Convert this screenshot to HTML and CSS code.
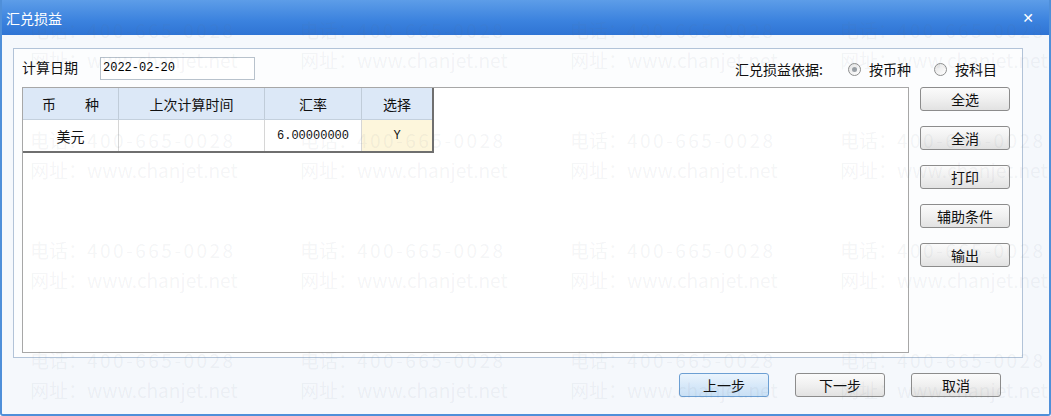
FILE: index.html
```html
<!DOCTYPE html>
<html lang="zh-CN">
	<head>
		<meta charset="UTF-8" />
		<title>汇兑损益</title>
		<link rel="stylesheet" href="styles.css">
	</head>
	<body>
		<div class="window">
			<div class="titlebar">
				<span class="title">汇兑损益</span>
				<span class="close">&#x2715;</span>
			</div>
			<div class="body">
				<div class="frame">
					<div class="toprow">
						<label class="field">
							<span>计算日期</span>
							<input class="date" value="2022-02-20" />
						</label>
						<div class="basis">
							<span class="basis-label">汇兑损益依据:</span>
							<span class="radio checked"></span>
							<span class="radio-text">按币种</span>
							<span class="radio"></span>
							<span class="radio-text">按科目</span>
						</div>
					</div>
					<div class="content">
						<div class="gridbox">
							<table class="grid">
								<thead>
									<tr>
										<th class="c1"><span class="spread"><span>币</span><span>种</span></span></th>
										<th class="c2">上次计算时间</th>
										<th class="c3">汇率</th>
										<th class="c4">选择</th>
									</tr>
								</thead>
								<tbody>
									<tr>
										<td class="c1">美元</td>
										<td class="c2"></td>
										<td class="c3 num">6.00000000</td>
										<td class="c4 pick">Y</td>
									</tr>
								</tbody>
							</table>
						</div>
						<div class="side">
							<button class="btn">全选</button>
							<button class="btn">全消</button>
							<button class="btn">打印</button>
							<button class="btn">辅助条件</button>
							<button class="btn">输出</button>
						</div>
					</div>
				</div>
				<div class="footer">
					<button class="btn focus">上一步</button>
					<button class="btn">下一步</button>
					<button class="btn">取消</button>
				</div>
			</div>
			<div class="watermark">
				<div class="wm"><p>电话：<span class="tel">400-665-0028</span></p><p>网址：www.chanjet.net</p></div>
				<div class="wm"><p>电话：<span class="tel">400-665-0028</span></p><p>网址：www.chanjet.net</p></div>
				<div class="wm"><p>电话：<span class="tel">400-665-0028</span></p><p>网址：www.chanjet.net</p></div>
				<div class="wm"><p>电话：<span class="tel">400-665-0028</span></p><p>网址：www.chanjet.net</p></div>
				<div class="wm"><p>电话：<span class="tel">400-665-0028</span></p><p>网址：www.chanjet.net</p></div>
				<div class="wm"><p>电话：<span class="tel">400-665-0028</span></p><p>网址：www.chanjet.net</p></div>
				<div class="wm"><p>电话：<span class="tel">400-665-0028</span></p><p>网址：www.chanjet.net</p></div>
				<div class="wm"><p>电话：<span class="tel">400-665-0028</span></p><p>网址：www.chanjet.net</p></div>
				<div class="wm"><p>电话：<span class="tel">400-665-0028</span></p><p>网址：www.chanjet.net</p></div>
				<div class="wm"><p>电话：<span class="tel">400-665-0028</span></p><p>网址：www.chanjet.net</p></div>
				<div class="wm"><p>电话：<span class="tel">400-665-0028</span></p><p>网址：www.chanjet.net</p></div>
				<div class="wm"><p>电话：<span class="tel">400-665-0028</span></p><p>网址：www.chanjet.net</p></div>
				<div class="wm"><p>电话：<span class="tel">400-665-0028</span></p><p>网址：www.chanjet.net</p></div>
				<div class="wm"><p>电话：<span class="tel">400-665-0028</span></p><p>网址：www.chanjet.net</p></div>
				<div class="wm"><p>电话：<span class="tel">400-665-0028</span></p><p>网址：www.chanjet.net</p></div>
				<div class="wm"><p>电话：<span class="tel">400-665-0028</span></p><p>网址：www.chanjet.net</p></div>
			</div>
		</div>
	</body>
</html>
```

FILE: styles.css
```css
html,
body {
	margin: 0;
	padding: 0;
	width: 1051px;
	height: 416px;
	overflow: hidden;
	font-family: "Noto Sans CJK SC", "Liberation Sans", sans-serif;
	font-size: 14px;
	color: #111;
}
.window {
	position: relative;
	display: flex;
	flex-direction: column;
	width: 1051px;
	height: 416px;
	box-sizing: border-box;
	border: 2px solid #4f8fd9;
	border-top: none;
	border-radius: 0 0 3px 3px;
	background-color: #f5f8fc;
	overflow: hidden;
}
.titlebar {
	display: flex;
	align-items: center;
	justify-content: space-between;
	height: 35px;
	margin: 0 -2px;
	padding: 0 17px 0 6px;
	background: linear-gradient(#5d9de8, #3b82de 60%, #2f74d4);
	color: #fff;
	flex-shrink: 0;
}
.title {
	font-size: 14px;
	line-height: 1;
	margin-top: 1px;
}
.close {
	font-size: 14px;
	font-weight: 700;
	font-family: "DejaVu Sans", sans-serif;
}
.body {
	display: flex;
	flex-direction: column;
	flex: 1;
	padding: 13px 26px 0 11px;
}
.frame {
	display: flex;
	flex-direction: column;
	flex-shrink: 0;
	height: 310px;
	box-sizing: border-box;
	border: 1px solid #b2c3d8;
	background-color: #fcfdfe;
	padding: 6px 12px 4px 8px;
}
.toprow {
	display: flex;
	align-items: center;
	justify-content: space-between;
	height: 24px;
}
.field {
	display: flex;
	align-items: center;
	gap: 22px;
}
.date {
	width: 155px;
	height: 23px;
	box-sizing: border-box;
	border: 1px solid #b8c2cc;
	background: #fff;
	padding: 0 2px;
	font-family: "Liberation Mono", monospace;
	font-size: 12px;
	color: #000;
	margin-top: 2px;
}
.basis {
	display: flex;
	align-items: center;
	margin-top: 4px;
}
.basis-label {
	margin-right: 25px;
}
.radio {
	position: relative;
	width: 13px;
	height: 13px;
	box-sizing: border-box;
	border: 1px solid #8e8f8f;
	border-radius: 50%;
	background: linear-gradient(135deg, #e4e4e4, #fff);
	margin-right: 8px;
}
.radio.checked::after {
	content: "";
	position: absolute;
	left: 3px;
	top: 3px;
	width: 5px;
	height: 5px;
	border-radius: 50%;
	background: #9aa0a6;
}
.radio-text {
	margin-right: 23px;
}
.radio-text:last-child {
	margin-right: 13px;
}
.content {
	display: flex;
	flex: 1;
	margin-top: 8px;
	gap: 11px;
}
.gridbox {
	flex: 1;
	border: 1px solid #a7a7a7;
	background-color: #fff;
}
.grid {
	border-collapse: collapse;
	border-right: 2px solid #6f6f6f;
	border-bottom: 2px solid #6f6f6f;
}
.grid th,
.grid td {
	height: 31px;
	padding: 0;
	text-align: center;
	font-weight: 400;
	border: 1px solid #c0ccd9;
	border-top: none;
}
.grid th {
	background-color: #dce8f7;
	border-left-color: #b6c6da;
	border-bottom-color: #c4d0dd;
}
.grid td {
	border-color: #d6d6d6;
}
.grid .c1 {
	width: 95px;
	border-left: none;
}
.grid .c2 {
	width: 145px;
}
.grid .c3 {
	width: 96px;
}
.grid .c4 {
	width: 70px;
}
.spread {
	display: inline-flex;
	gap: 29px;
}
.num {
	font-family: "Liberation Mono", monospace;
	font-size: 12px;
}
.pick {
	background-color: #fdf6dc;
	font-family: "Liberation Mono", monospace;
	font-size: 12px;
	font-weight: 700;
}
.side {
	display: flex;
	flex-direction: column;
	gap: 15px;
	width: 90px;
}
.btn {
	height: 24px;
	width: 90px;
	box-sizing: border-box;
	border: 1px solid #8c8c8c;
	border-radius: 3px;
	background: linear-gradient(#fbfbfb, #f0f0f0 50%, #e2e2e2);
	font-family: "Noto Sans CJK SC", "Liberation Sans", sans-serif;
	font-size: 14px;
	color: #111;
	padding: 0;
	line-height: 1;
}
.footer {
	display: flex;
	justify-content: flex-end;
	gap: 26px;
	margin-top: 15px;
	margin-right: 22px;
}
.btn.focus {
	border-color: #6c9fd3;
	background: linear-gradient(#eaf4fd, #d8e9f9 50%, #c9e0f5);
}
.watermark {
	position: absolute;
	left: 28px;
	top: 17px;
	display: grid;
	grid-template-columns: repeat(4, 270px);
	grid-auto-rows: 110px;
	pointer-events: none;
}
.wm p {
	margin: 0;
	height: 30px;
	line-height: 26px;
	font-size: 19px;
	color: rgba(100, 115, 130, 0.08);
	white-space: nowrap;
}
.tel {
	letter-spacing: 2.5px;
}
```
